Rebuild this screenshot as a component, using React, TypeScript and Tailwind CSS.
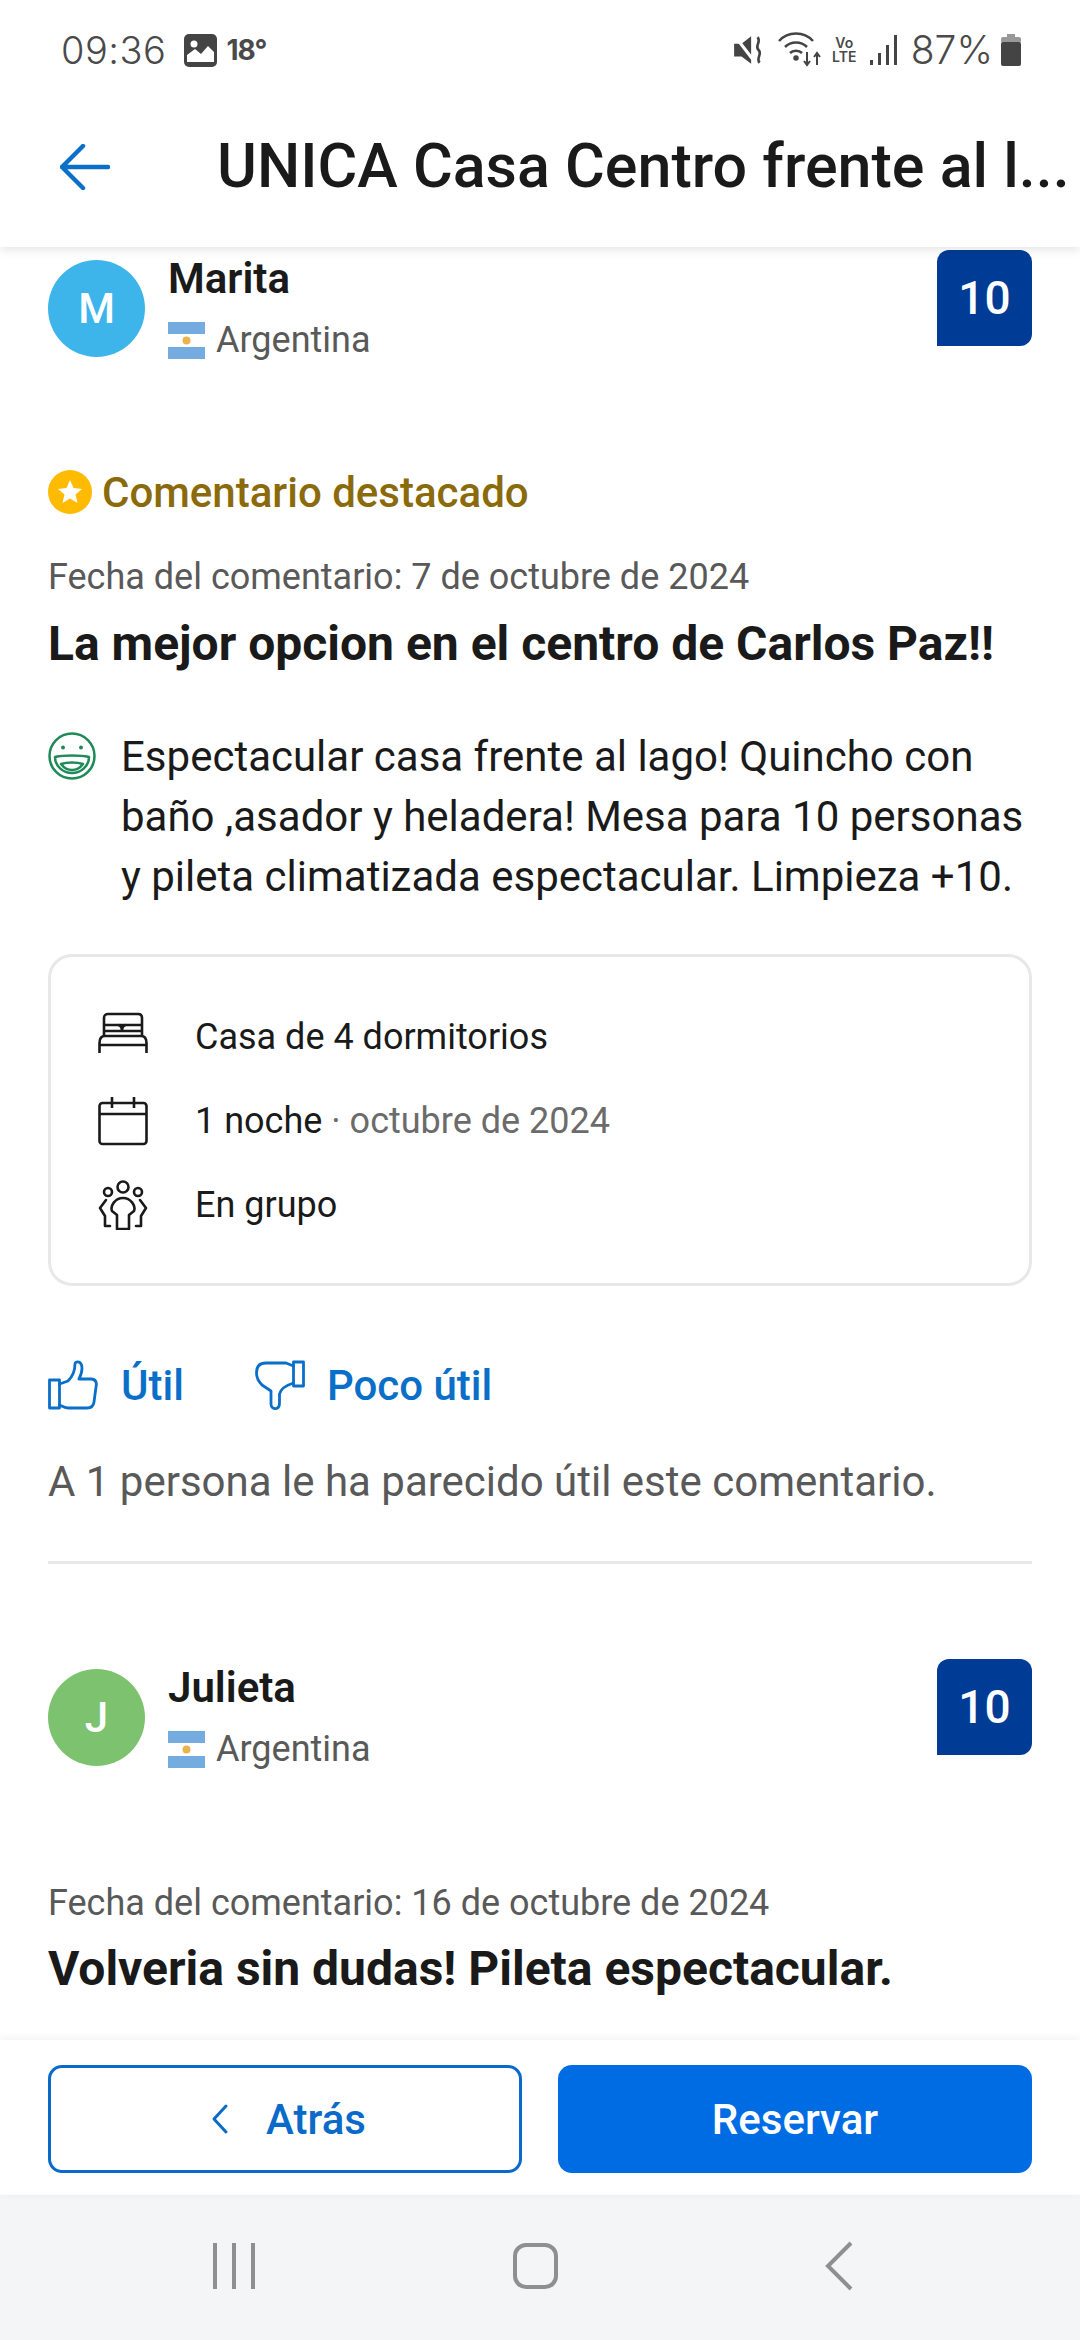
import React from "react";

const FlagAR = () => (
  <svg width="37" height="37" viewBox="0 0 37 37" className="shrink-0">
    <rect width="37" height="12" fill="#74acdf" />
    <rect y="12" width="37" height="13" fill="#ffffff" />
    <rect y="25" width="37" height="12" fill="#74acdf" />
    <circle cx="18.5" cy="18.5" r="4" fill="#e9b44c" />
  </svg>
);

const Reviewer = ({ initial, name, color }: { initial: string; name: string; color: string }) => (
  <div className="flex items-start justify-between">
    <div className="flex items-start mt-[10px]">
      <div
        className={`w-[97px] h-[97px] rounded-full flex items-center justify-center text-white text-[42px] font-medium ${color}`}
      >
        {initial}
      </div>
      <div className="ml-[23px] -mt-[6px]">
        <div className="text-[42px] leading-[50px] font-semibold text-[#1a1a1a]">{name}</div>
        <div className="flex items-center mt-[11px] h-[50px]">
          <FlagAR />
          <span className="ml-[11px] text-[36px] text-[#595959]">Argentina</span>
        </div>
      </div>
    </div>
    <div className="w-[95px] h-[96px] bg-[#003b95] rounded-tl-[12px] rounded-tr-[12px] rounded-br-[12px] flex items-center justify-center text-white text-[46px] font-medium">
      10
    </div>
  </div>
);

const Row = ({ icon, children }: { icon: React.ReactNode; children: React.ReactNode }) => (
  <div className="flex items-center h-[84px]">
    <div className="w-[50px] h-[50px] shrink-0">{icon}</div>
    <div className="ml-[47px] text-[36px] text-[#1a1a1a]">{children}</div>
  </div>
);

const ThumbUp = () => (
  <svg width="50" height="50" viewBox="0 0 50 50" fill="none" stroke="#0a6fc9" strokeWidth="2.800" strokeLinejoin="round" strokeLinecap="round">
    <rect x="1.500" y="20" width="10" height="28" />
    <path d="M11.500 24 L20 21 C24 17 27 10 27 4 C27 1.500 32 0.500 33.500 5 C35 10 33 15 31 19 L43 19 C48 19 49 23 48 27 L46 42 C45.500 46 43 48 39 48 L20 48 C16 48 14 46 11.500 45" />
  </svg>
);

const ThumbDown = () => (
  <svg width="50" height="50" viewBox="0 0 50 50" fill="none" stroke="#0a6fc9" strokeWidth="2.800" strokeLinejoin="round" strokeLinecap="round">
    <rect x="38.500" y="2" width="10" height="24" />
    <path d="M38.500 6 L31 3 L11 3 C4 3 1.500 7 1.500 13 C1.500 19 4 22 7 25 L16 31 L16 44 C16 48 19 49 21 48.500 C24 48 24.500 46 24.500 43 L24.500 34 C26 28 32 25 38.500 23" />
  </svg>
);

const Bed = () => (
  <svg viewBox="0 0 50 50" fill="none" stroke="#1a1a1a" strokeWidth="2.600" strokeLinejoin="round">
    <path d="M1.500 41 L1.500 31 C1.500 26 4 24 7 24 L43 24 C46 24 48.500 26 48.500 31 L48.500 41" />
    <path d="M1.500 33 H48.500" />
    <path d="M6 24 V6 C6 3 8 2 10 2 H40 C42 2 44 3 44 6 V24" />
    <path d="M6 13 H44" />
    <path d="M6 19 H24 C24 15 22 13 20 13 M24 19 H44 M24 19 C24 15 26 13 28 13" />
  </svg>
);

const Calendar = () => (
  <svg viewBox="0 0 50 50" fill="none" stroke="#1a1a1a" strokeWidth="2.600" strokeLinejoin="round">
    <rect x="1.500" y="7" width="47" height="41" rx="3" />
    <path d="M1.500 18 H48.500 M14 1 V12 M36 1 V12" />
  </svg>
);

const Group = () => (
  <svg viewBox="0 0 50 50" fill="none" stroke="#1a1a1a" strokeWidth="2.600" strokeLinejoin="round" strokeLinecap="round">
    <circle cx="25" cy="7" r="5.500" />
    <circle cx="10" cy="12" r="4" />
    <circle cx="40" cy="12" r="4" />
    <path d="M19 49 V35 L14 31 C12 26 17 18 25 18 C33 18 38 26 36 31 L31 35 V49 Z" />
    <path d="M8 20 L2 28 L7 36 L7 46 H12" />
    <path d="M42 20 L48 28 L43 36 L43 46 H38" />
  </svg>
);

const Smile = () => (
  <svg width="48" height="48" viewBox="0 0 48 48" fill="none" stroke="#1f8a58" strokeWidth="2.500" strokeLinejoin="round" className="shrink-0">
    <circle cx="24" cy="24" r="22.500" />
    <circle cx="15" cy="15.500" r="2" fill="#1f8a58" stroke="none" />
    <circle cx="33" cy="15.500" r="2" fill="#1f8a58" stroke="none" />
    <path d="M7 25 C16 23 32 23 41 25 C41 34 33 41 24 41 C15 41 7 34 7 25 Z" />
    <path d="M13 32 C19 30 29 30 35 32 C32 36 28 38 24 38 C20 38 16 36 13 32 Z" />
  </svg>
);

export default function App() {
  return (
    <div className="w-[1080px] h-[2340px] flex flex-col bg-white overflow-hidden font-['Roboto',sans-serif] text-[#1a1a1a]">
      <header className="relative z-10 h-[247px] shrink-0 bg-white shadow-[0_2px_10px_rgba(0,0,0,0.12)]">
        <div className="flex items-center justify-between h-[100px] pl-[61px] pr-[58px] text-[#4a4a4a]">
          <div className="flex items-center font-['Inter',sans-serif]">
            <span className="text-[38px] font-light tracking-[0.5px]">09:36</span>
            <svg width="33" height="33" viewBox="0 0 33 33" className="ml-[18px]">
              <rect width="33" height="33" rx="5" fill="#444" />
              <circle cx="10" cy="10" r="3.500" fill="#fff" />
              <path d="M3 28 V21 L11 15 L17 20 L24 12 L30 18 V28 Z" fill="#fff" />
            </svg>
            <span className="ml-[9px] text-[28px] font-bold tracking-[-1px]">18°</span>
          </div>
          <div className="flex items-center">
            <svg width="34" height="34" viewBox="0 0 32 32" fill="#444">
              <path d="M2 10 H9 L18 3 V29 L9 22 H2 Z" />
              <path d="M2 2 L22 28" stroke="#fff" strokeWidth="3" />
              <path d="M24 4 C28 8 21 12 25 16 C29 20 22 24 26 28" fill="none" stroke="#444" strokeWidth="2.500" />
            </svg>
            <svg width="44" height="36" viewBox="0 0 44 36" fill="none" stroke="#444" strokeWidth="2.500" className="ml-[12px]">
              <path d="M1 9 C10 -1 26 -1 35 9" />
              <path d="M7 15 C13 9 23 9 29 15" />
              <path d="M12 21 C15 18 21 18 24 21" />
              <circle cx="18" cy="26" r="1.500" fill="#444" />
              <path d="M29 20 V32 M26 29 L29 33 L32 29 M39 33 V21 M36 25 L39 21 L42 25" strokeWidth="2" />
            </svg>
            <div className="ml-[9px] w-[27px] text-[14px] leading-[14px] font-['Inter',sans-serif] font-semibold text-center">
              <div>Vo</div>
              <div>LTE</div>
            </div>
            <div className="ml-[12px] flex items-end gap-[5px] h-[30px]">
              <div className="w-[3px] h-[5px] bg-[#444]" />
              <div className="w-[3px] h-[12px] bg-[#444]" />
              <div className="w-[3px] h-[20px] bg-[#444]" />
              <div className="w-[3px] h-[30px] bg-[#444]" />
            </div>
            <span className="ml-[14px] text-[39px] font-['Inter',sans-serif] font-light">87%</span>
            <svg width="22" height="32" viewBox="0 0 22 32" className="ml-[7px]">
              <rect x="7" y="0" width="8" height="4" fill="#999" />
              <rect x="1" y="3" width="20" height="6" rx="2" fill="#999" />
              <rect x="1" y="8" width="20" height="24" rx="2" fill="#444" />
            </svg>
          </div>
        </div>
        <div className="flex items-center mt-[19px] h-[96px]">
          <svg width="50" height="46" viewBox="0 0 50 46" fill="none" stroke="#0a6fc9" strokeWidth="4.500" strokeLinecap="round" strokeLinejoin="round" className="ml-[60px] shrink-0">
            <path d="M2 23 H48 M23 2 L2 23 L23 44" />
          </svg>
          <div className="ml-[107px] text-[61px] font-medium text-[#1a1a1a] whitespace-nowrap">
            UNICA Casa Centro frente al l...
          </div>
        </div>
      </header>

      <main className="flex-1 min-h-0 overflow-hidden px-[48px] pt-[3px]">
        <Reviewer initial="M" name="Marita" color="bg-[#3db5eb]" />

        <div className="flex items-center mt-[105px] h-[44px]">
          <svg width="44" height="44" viewBox="0 0 44 44" className="shrink-0">
            <circle cx="22" cy="22" r="22" fill="#febb02" />
            <path d="M22 10 L25.500 18 L34 19 L27.500 24.500 L29.500 33 L22 28.500 L14.500 33 L16.500 24.500 L10 19 L18.500 18 Z" fill="#fff" />
          </svg>
          <span className="ml-[10px] text-[42px] font-medium text-[#8a6a0a]">Comentario destacado</span>
        </div>

        <div className="mt-[38px] text-[36px] leading-[50px] text-[#595959]">Fecha del comentario: 7 de octubre de 2024</div>
        <div className="mt-[14px] text-[48px] leading-[56px] font-bold text-[#1a1a1a]">
          La mejor opcion en el centro de Carlos Paz!!
        </div>

        <div className="flex items-start mt-[55px]">
          <div className="mt-[5px] shrink-0"><Smile /></div>
          <p className="ml-[25px] text-[42px] leading-[60px] text-[#1a1a1a] whitespace-nowrap">
            Espectacular casa frente al lago! Quincho con
            <br />
            baño ,asador y heladera! Mesa para 10 personas
            <br />
            y pileta climatizada espectacular. Limpieza +10.
          </p>
        </div>

        <div className="mt-[47px] h-[332px] border-[3px] border-[#e8e8e8] rounded-[24px] pt-[38px] pl-[47px]">
          <Row icon={<Bed />}>Casa de 4 dormitorios</Row>
          <Row icon={<Calendar />}>
            1 noche <span className="text-[#6b6b6b]">· octubre de 2024</span>
          </Row>
          <Row icon={<Group />}>En grupo</Row>
        </div>

        <div className="flex items-center mt-[71px] h-[56px] text-[42px] font-medium text-[#0a6fc9]">
          <ThumbUp />
          <span className="ml-[23px]">Útil</span>
          <div className="ml-[71px]"><ThumbDown /></div>
          <span className="ml-[22px]">Poco útil</span>
        </div>

        <div className="mt-[44px] text-[42px] leading-[50px] text-[#595959]">A 1 persona le ha parecido útil este comentario.</div>
        <div className="mt-[54px] h-[3px] bg-[#e8e8e8]" />

        <div className="mt-[95px]">
          <Reviewer initial="J" name="Julieta" color="bg-[#7dc36f]" />
        </div>

        <div className="mt-[104px] text-[36px] leading-[50px] text-[#595959]">Fecha del comentario: 16 de octubre de 2024</div>
        <div className="mt-[13px] text-[48px] leading-[56px] font-bold text-[#1a1a1a]">Volveria sin dudas! Pileta espectacular.</div>
      </main>

      <footer className="relative z-10 h-[155px] shrink-0 bg-white shadow-[0_-2px_8px_rgba(0,0,0,0.06)] px-[48px] pt-[25px] flex justify-between">
        <button className="w-[474px] h-[108px] border-[3px] border-[#0a6ac9] rounded-[14px] flex items-center justify-center pl-[6px] text-[#0a6ac9] text-[42px] font-medium">
          <svg width="20" height="32" viewBox="0 0 20 32" fill="none" stroke="#0a6ac9" strokeWidth="3" strokeLinecap="round" strokeLinejoin="round">
            <path d="M16 3 L4 16 L16 29" />
          </svg>
          <span className="ml-[36px]">Atrás</span>
        </button>
        <button className="w-[474px] h-[108px] bg-[#006ce4] rounded-[14px] flex items-center justify-center text-white text-[42px] font-medium">
          Reservar
        </button>
      </footer>

      <nav className="h-[145px] shrink-0 bg-[#f4f5f7] flex items-center pb-[4px] pl-[213px]">
        <div className="flex gap-[15px]">
          <div className="w-[4px] h-[46px] bg-[#8f8f8f]" />
          <div className="w-[4px] h-[46px] bg-[#8f8f8f]" />
          <div className="w-[4px] h-[46px] bg-[#8f8f8f]" />
        </div>
        <div className="ml-[258px] w-[45px] h-[46px] border-[4px] border-[#8f8f8f] rounded-[13px]" />
        <svg width="28" height="50" viewBox="0 0 28 50" fill="none" stroke="#8f8f8f" strokeWidth="4" className="ml-[267px]">
          <path d="M26 2 L3 25 L26 48" />
        </svg>
      </nav>
    </div>
  );
}
